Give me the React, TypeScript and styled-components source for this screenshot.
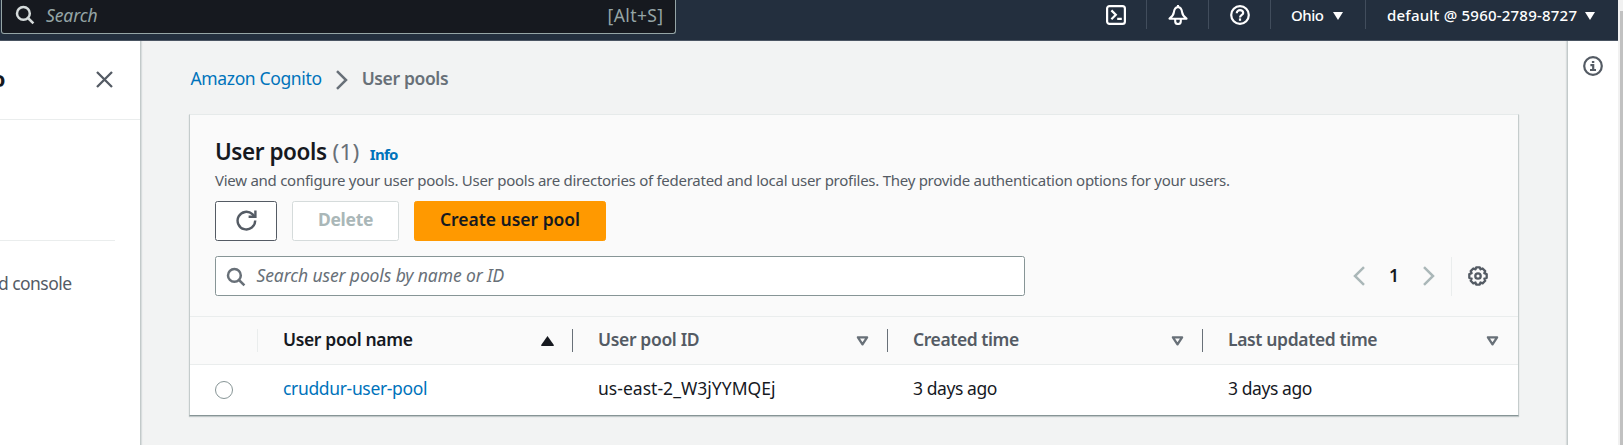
import React from 'react';
import styled, { createGlobalStyle } from 'styled-components';

const GlobalStyle = createGlobalStyle`
  *, *::before, *::after { box-sizing: border-box; }
  body {
    margin: 0;
    overflow: hidden;
    background: #f2f3f3;
    color: #16191f;
    font: 400 17.5px/20px "Noto Sans", "Open Sans", sans-serif;
  }
  a { color: #0073bb; text-decoration: none; }
  svg { display: block; flex: none; }
`;

const Window = styled.div`
  display: grid;
  grid-template-columns: 1fr 5px;
  width: 1623px;
  height: 445px;
`;

const Shell = styled.div`
  display: flex;
  flex-direction: column;
  min-width: 0;
`;

const ScrollTrack = styled.div`
  padding: 11px 0 0 2px;
  background: #f1f1f1;
`;

const ScrollThumb = styled.div`
  height: 100%;
  background: #c1c1c1;
`;

const TopBar = styled.header`
  display: flex;
  justify-content: space-between;
  height: 41px;
  background: #232f3e;
  border-bottom: 1px solid #4b5563;
`;

const GlobalSearch = styled.div`
  display: flex;
  align-items: flex-start;
  width: 675px;
  height: 34px;
  margin-left: 1px;
  padding: 5px 11.5px 0 13px;
  background: #16191f;
  border: 1px solid #95a5a6;
  border-top: 0;
  border-radius: 0 0 3px 3px;
  color: #95a5a6;
`;

const SearchHint = styled.em`
  flex: 1;
  margin-left: 11px;
  letter-spacing: -0.11px;
`;

const Shortcut = styled.span`
  letter-spacing: 0.4px;
`;

const TopNav = styled.nav`
  display: flex;
  height: 29px;
`;

const NavIcon = styled.div`
  display: flex;
  justify-content: center;
  width: 62px;
  padding-top: 5px;
  border-right: 1px solid #414d5c;
`;

const NavMenu = styled.div<{ $width: number; $spacing: number; $last?: boolean }>`
  display: flex;
  justify-content: space-between;
  width: ${(p) => p.$width}px;
  padding: 5px ${(p) => (p.$last ? 23.5 : 22.5)}px 0 ${(p) => (p.$last ? 21 : 20)}px;
  border-right: ${(p) => (p.$last ? 0 : 1)}px solid #414d5c;
  color: #fff;
  font-size: 15px;
  font-weight: 500;
  letter-spacing: ${(p) => p.$spacing}px;
  svg { margin-top: 7px; }
`;

const Body = styled.div`
  display: flex;
  flex: 1;
  min-height: 0;
`;

const SideNav = styled.aside`
  width: 141px;
  background: #fff;
  border-right: 1px solid #c3caca;
  box-shadow: 1px 0 1px rgba(0, 28, 36, 0.1);
`;

const SideHeader = styled.div`
  display: flex;
  justify-content: space-between;
  height: 79px;
  padding: 30px 27.5px 0 0;
  border-bottom: 1px solid #eaeded;
`;

const SideTitle = styled.div`
  display: flex;
  justify-content: flex-end;
  width: 5.5px;
  height: 26px;
  margin-top: -6px;
  overflow: hidden;
  font-size: 22px;
  font-weight: 700;
  line-height: 26px;
`;

const SideDivider = styled.div`
  width: 115px;
  height: 121px;
  border-bottom: 1px solid #eaeded;
`;

const SideLink = styled.div`
  display: flex;
  justify-content: flex-end;
  width: 71.5px;
  height: 24px;
  margin-top: 30px;
  overflow: hidden;
  color: #545b64;
  line-height: 24px;
  letter-spacing: -0.55px;
  white-space: nowrap;
`;

const Main = styled.main`
  flex: 1;
  min-width: 0;
  padding: 27px 48px 0 48px;
`;

const Breadcrumbs = styled.nav`
  display: flex;
  height: 46px;
  padding-left: 1.5px;
  letter-spacing: -0.36px;
  svg { margin: 2px 14px 0; }
`;

const CrumbCurrent = styled.span`
  color: #687078;
  font-weight: 600;
  letter-spacing: -0.37px;
`;

const Panel = styled.section`
  height: 302px;
  background: #fafafa;
  border: 1px solid #c5cccc;
  border-top-color: #e6eaea;
  border-bottom-color: #879596;
  box-shadow: 0 1px 1px rgba(0, 28, 36, 0.2);
`;

const PanelHeader = styled.div`
  display: flex;
  flex-direction: column;
  height: 202px;
  padding: 23px 25px 0 25px;
  border-bottom: 1px solid #eaeded;
`;

const Title = styled.h2`
  display: flex;
  margin: 0;
  font-size: 22.5px;
  font-weight: 600;
  line-height: 28px;
  letter-spacing: -0.44px;
`;

const Count = styled.span`
  margin-left: 6px;
  color: #687078;
  font-weight: 400;
  letter-spacing: 0.1px;
`;

const InfoLink = styled.a`
  height: 28px;
  margin-left: 10.5px;
  font-size: 15px;
  font-weight: 700;
  line-height: 33px;
  letter-spacing: -0.7px;
`;

const Description = styled.p`
  height: 31px;
  margin: 4px 0 0;
  color: #545b64;
  font-size: 15px;
  letter-spacing: -0.264px;
  white-space: nowrap;
`;

const Actions = styled.div`
  display: flex;
  gap: 15px;
  height: 40px;
`;

const Button = styled.button<{ $kind: 'normal' | 'disabled' | 'primary'; $width: number }>`
  display: flex;
  align-items: center;
  justify-content: center;
  width: ${(p) => p.$width}px;
  height: 40px;
  padding: 0 0 4px;
  background: ${(p) => (p.$kind === 'primary' ? '#ff9900' : '#fff')};
  border: 1px solid
    ${(p) => ({ normal: '#545b64', disabled: '#d5dbdb', primary: '#ff9900' })[p.$kind]};
  border-radius: 2.5px;
  color: ${(p) => (p.$kind === 'disabled' ? '#aab7b8' : '#16191f')};
  font: inherit;
  font-weight: ${(p) => (p.$kind === 'disabled' ? 700 : 600)};
  letter-spacing: ${(p) => (p.$kind === 'disabled' ? -0.3 : -0.02)}px;
  svg { margin-top: 3px; }
`;

const Tools = styled.div`
  display: flex;
  justify-content: space-between;
  margin-top: 15px;
`;

const Filter = styled.div`
  display: flex;
  width: 810px;
  height: 40px;
  padding: 8px 10px 0;
  background: #fff;
  border: 1px solid #879596;
  border-radius: 2.5px;
  color: #687078;
  letter-spacing: -0.11px;
  svg { margin: 2px 10.5px 0 0; }
`;

const Pager = styled.div`
  display: flex;
  align-items: center;
  padding-right: 5px;
`;

const PageNumber = styled.span`
  width: 58px;
  padding-bottom: 3px;
  text-align: center;
  font-weight: 600;
`;

const PagerDivider = styled.div`
  width: 1px;
  height: 39px;
  margin: 0 16px;
  background: #eaeded;
`;

const Row = styled.div<{ $head?: boolean }>`
  display: grid;
  grid-template-columns: 68px 315px 315px 315px 1fr;
  height: ${(p) => (p.$head ? 48 : 50)}px;
  background: ${(p) => (p.$head ? '#fafafa' : '#fff')};
  border-bottom: ${(p) => (p.$head ? 1 : 0)}px solid #eaeded;
`;

const HeadCell = styled.div<{ $active?: boolean; $spacing?: number; $last?: boolean }>`
  display: flex;
  justify-content: space-between;
  height: 23px;
  margin-top: 12px;
  padding: 0 ${(p) => (p.$last ? 19 : 18)}px 0 25px;
  border-right: ${(p) => (p.$last ? 0 : 1)}px solid #687078;
  color: ${(p) => (p.$active ? '#16191f' : '#545b64')};
  font-weight: 600;
  letter-spacing: ${(p) => p.$spacing ?? 0}px;
  svg { margin-top: 7px; }
`;

const SelectHeadCell = styled.div`
  height: 23px;
  margin-top: 12px;
  border-right: 1px solid #eaeded;
`;

const Cell = styled.div<{ $spacing?: number }>`
  padding: 13px 0 0 25px;
  letter-spacing: ${(p) => p.$spacing ?? 0}px;
`;

const RadioCell = styled.div`
  padding: 16px 0 0 25px;
`;

const Radio = styled.div`
  width: 18px;
  height: 18px;
  border: 1px solid #879596;
  border-radius: 50%;
  background: #fff;
`;

const HelpRail = styled.aside`
  display: flex;
  justify-content: center;
  width: 51px;
  padding-top: 15px;
  background: #fff;
  border-left: 1px solid #c3caca;
  box-shadow: -1px 0 1px rgba(0, 28, 36, 0.1);
`;

const SearchIcon = ({ color }: { color: string }) => (
  <svg width="20" height="20" viewBox="0 0 20 20" fill="none" stroke={color} strokeWidth="2.5">
    <circle cx="8.4" cy="8.4" r="6.4" />
    <path d="M13 13l5.4 5.4" />
  </svg>
);

const TerminalIcon = () => (
  <svg width="20" height="20" viewBox="0 0 20 20" fill="none" stroke="#fff" strokeWidth="2.2">
    <rect x="1.1" y="1.1" width="17.8" height="17.8" rx="2.4" />
    <path d="M5.4 5.4l4.4 4.4-4.4 4.4M11.2 13.9h4.6" />
  </svg>
);

const BellIcon = () => (
  <svg width="20" height="20" viewBox="0 0 20 20" fill="none" stroke="#fff" strokeWidth="2.1" strokeLinejoin="round">
    <path d="M10 2C7.2 2.4 6.2 4.6 5.9 7.2c-.3 2.8-1.6 4.4-4.4 6.5h17c-2.8-2.1-4.1-3.7-4.4-6.5C13.8 4.6 12.8 2.4 10 2z" />
    <path d="M7.2 14v2.2a2.8 2.8 0 0 0 5.6 0V14M10 0v2" />
  </svg>
);

const HelpIcon = () => (
  <svg width="20" height="20" viewBox="0 0 20 20" fill="none" stroke="#fff" strokeWidth="2.2">
    <circle cx="10" cy="10" r="8.8" />
    <path d="M6.8 8.2c0-1.9 1.4-3 3.2-3s3.2 1.1 3.2 2.7c0 2-3.2 2-3.2 4.6" />
    <path d="M10 13.4v2.4" />
  </svg>
);

const InfoIcon = () => (
  <svg width="20" height="20" viewBox="0 0 20 20" fill="none" stroke="#545b64" strokeWidth="2.2">
    <circle cx="10" cy="10" r="8.8" />
    <path d="M8.9 6h2.4M7.4 9.2h2.8v4.4M7 14h6" />
  </svg>
);

const CloseIcon = () => (
  <svg width="17" height="17" viewBox="0 0 17 17" fill="none" stroke="#545b64" strokeWidth="2.3">
    <path d="M1 1l15 15M16 1L1 16" />
  </svg>
);

const Chevron = ({ color, back }: { color: string; back?: boolean }) => (
  <svg width="12" height="20" viewBox="0 0 12 20" fill="none" stroke={color} strokeWidth="2.5">
    <path d={back ? 'M11 1.2L2 10l9 8.8' : 'M1 1.2L10 10l-9 8.8'} />
  </svg>
);

const RefreshIcon = () => (
  <svg width="21" height="21" viewBox="0 0 21 21" fill="none" stroke="#545b64" strokeWidth="2.4">
    <path d="M19.2 10.6a8.8 8.8 0 1 1-2.8-6.4l2 2.2" />
    <path d="M19.4.6v6.2h-6.8" />
  </svg>
);

const GearIcon = () => (
  <svg width="20" height="20" viewBox="0 0 20 20" fill="none" stroke="#545b64" strokeWidth="2.3" strokeLinejoin="round">
    <path d="M8.2 1.3h3.6l.7 2 2.1-.8 2.6 2.6-.9 2.1 2.4.9v3.7l-2.3.8.8 2.2-2.6 2.6-2.1-.9-.8 2.2H8.2l-.7-2.2-2.2.9-2.6-2.6.9-2.2-2.3-.8V8.1l2.3-.9-.9-2.1 2.6-2.6 2.2.8z" />
    <circle cx="10" cy="10" r="2.7" />
  </svg>
);

const CaretIcon = () => (
  <svg width="10" height="8" viewBox="0 0 10 8" fill="#fff">
    <path d="M0 0h10L5 8z" />
  </svg>
);

const SortIcon = ({ ascending }: { ascending?: boolean }) =>
  ascending ? (
    <svg width="13" height="10" viewBox="0 0 13 10" fill="#16191f">
      <path d="M6.5 0L13 9.2 12.4 10H.6L0 9.2z" />
    </svg>
  ) : (
    <svg width="13" height="10" viewBox="0 0 13 10" fill="none" stroke="#687078" strokeWidth="2.3" strokeLinejoin="round">
      <path d="M1.9 1.3h9.2L6.5 8.4z" />
    </svg>
  );

export default function App() {
  return (
    <Window>
      <GlobalStyle />
      <Shell>
        <TopBar>
          <GlobalSearch>
            <SearchIcon color="#d5dbdb" />
            <SearchHint>Search</SearchHint>
            <Shortcut>[Alt+S]</Shortcut>
          </GlobalSearch>
          <TopNav>
            <NavIcon><TerminalIcon /></NavIcon>
            <NavIcon><BellIcon /></NavIcon>
            <NavIcon><HelpIcon /></NavIcon>
            <NavMenu $width={95} $spacing={-0.5}>Ohio <CaretIcon /></NavMenu>
            <NavMenu $width={252} $spacing={0.22} $last>default @ 5960-2789-8727 <CaretIcon /></NavMenu>
          </TopNav>
        </TopBar>
        <Body>
          <SideNav>
            <SideHeader>
              <SideTitle>o</SideTitle>
              <CloseIcon />
            </SideHeader>
            <SideDivider />
            <SideLink>d console</SideLink>
          </SideNav>
          <Main>
            <Breadcrumbs>
              <a href="#cognito">Amazon Cognito</a>
              <Chevron color="#687078" />
              <CrumbCurrent>User pools</CrumbCurrent>
            </Breadcrumbs>
            <Panel>
              <PanelHeader>
                <Title>
                  User pools <Count>(1)</Count>
                  <InfoLink href="#info">Info</InfoLink>
                </Title>
                <Description>
                  View and configure your user pools. User pools are directories of federated and local user
                  profiles. They provide authentication options for your users.
                </Description>
                <Actions>
                  <Button $kind="normal" $width={62} aria-label="Refresh"><RefreshIcon /></Button>
                  <Button $kind="disabled" $width={107}>Delete</Button>
                  <Button $kind="primary" $width={192}>Create user pool</Button>
                </Actions>
                <Tools>
                  <Filter>
                    <SearchIcon color="#687078" />
                    <em>Search user pools by name or ID</em>
                  </Filter>
                  <Pager>
                    <Chevron color="#aab7b8" back />
                    <PageNumber>1</PageNumber>
                    <Chevron color="#aab7b8" />
                    <PagerDivider />
                    <GearIcon />
                  </Pager>
                </Tools>
              </PanelHeader>
              <Row $head>
                <SelectHeadCell />
                <HeadCell $active $spacing={-0.36}>User pool name <SortIcon ascending /></HeadCell>
                <HeadCell $spacing={-0.35}>User pool ID <SortIcon /></HeadCell>
                <HeadCell $spacing={-0.42}>Created time <SortIcon /></HeadCell>
                <HeadCell $spacing={-0.36} $last>Last updated time <SortIcon /></HeadCell>
              </Row>
              <Row>
                <RadioCell><Radio /></RadioCell>
                <Cell $spacing={-0.344}><a href="#pool">cruddur-user-pool</a></Cell>
                <Cell $spacing={0.03}>us-east-2_W3jYYMQEj</Cell>
                <Cell $spacing={-0.42}>3 days ago</Cell>
                <Cell $spacing={-0.42}>3 days ago</Cell>
              </Row>
            </Panel>
          </Main>
          <HelpRail><InfoIcon /></HelpRail>
        </Body>
      </Shell>
      <ScrollTrack><ScrollThumb /></ScrollTrack>
    </Window>
  );
}
